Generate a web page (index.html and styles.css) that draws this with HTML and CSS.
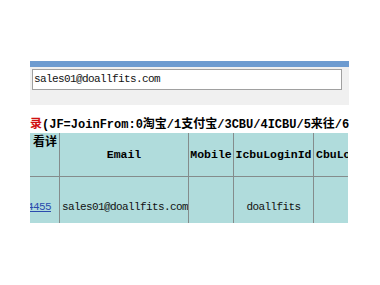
FILE: index.html
```html
<!DOCTYPE html>
<html>
<head>
<meta charset="utf-8">
<link rel="stylesheet" href="styles.css">
</head>
<body>
<div class="page">
  <div class="bar"></div>
  <div class="panel">
    <div class="input">sales01@doallfits.com</div>
  </div>
  <div class="heading"><span class="red">录</span>(JF=JoinFrom:0淘宝/1支付宝/3CBU/4ICBU/5来往/6</div>
  <div class="clip">
    <table class="grid">
      <tr>
        <th class="c1 top">看详</th>
        <th class="c2">Email</th>
        <th class="c3">Mobile</th>
        <th class="c4">IcbuLoginId</th>
        <th class="c5">CbuLo</th>
      </tr>
      <tr>
        <td class="c1 num"><a href="#">104455</a></td>
        <td class="c2 left">sales01@doallfits.com</td>
        <td class="c3"></td>
        <td class="c4">doallfits</td>
        <td class="c5"></td>
      </tr>
    </table>
  </div>
</div>
</body>
</html>
```

FILE: styles.css
```css
html, body {
  margin: 0;
  padding: 0;
  background: #ffffff;
}
body {
  font-family: "Liberation Mono", "Noto Sans CJK SC", monospace;
  color: #000;
}
.page {
  padding: 61px 0 0 30px;
  width: 319px;
}
.bar {
  height: 6px;
  background: #6d9bd0;
}
.panel {
  background: #f0f0f0;
  height: 38px;
  padding: 2px 0 0 2px;
  box-sizing: border-box;
}
.input {
  width: 310px;
  height: 21px;
  box-sizing: border-box;
  border: 1px solid #a0a0a0;
  background: #fff;
  font-size: 11px;
  letter-spacing: -0.6px;
  line-height: 19px;
  padding-left: 1px;
  color: #111;
}
.heading {
  height: 28px;
  display: flex;
  align-items: flex-end;
  white-space: nowrap;
  overflow: hidden;
  font-size: 12px;
  font-weight: bold;
  line-height: 15px;
  font-family: "Liberation Mono", "Noto Sans CJK SC", monospace;
}
.red {
  color: #d01010;
}
.clip {
  width: 318px;
  height: 90px;
  overflow: hidden;
  background: #b0dcdc;
}
.grid {
  margin-left: -20px;
  border-collapse: separate;
  border-spacing: 0;
  table-layout: fixed;
  width: 390px;
  background: #b0dcdc;
}
.grid th, .grid td {
  box-sizing: border-box;
  border-right: 1px solid #848c8c;
  padding: 0;
  text-align: center;
  vertical-align: middle;
  white-space: nowrap;
  overflow: hidden;
}
.grid th {
  height: 44px;
  border-bottom: 1px solid #848c8c;
  font-size: 11.5px;
  font-weight: bold;
}
.grid td {
  height: 60px;
  font-size: 11px;
  letter-spacing: -0.6px;
  color: #111;
}
.c1 { width: 50px; }
.c2 { width: 129px; }
.c3 { width: 45px; }
.c4 { width: 80px; }
.c5 { width: 86px; }
.grid th.c5 {
  text-align: left;
  padding-left: 2px;
}
.grid th.top {
  vertical-align: top;
  text-align: right;
  padding: 4px 2px 0 0;
  font-size: 12px;
  line-height: 13px;
}
.grid td.num {
  text-align: right;
  padding-right: 8px;
}
.num a {
  color: #2b4cae;
  text-decoration: underline;
}
.grid td.left {
  text-align: left;
  padding-left: 2px;
}
```
